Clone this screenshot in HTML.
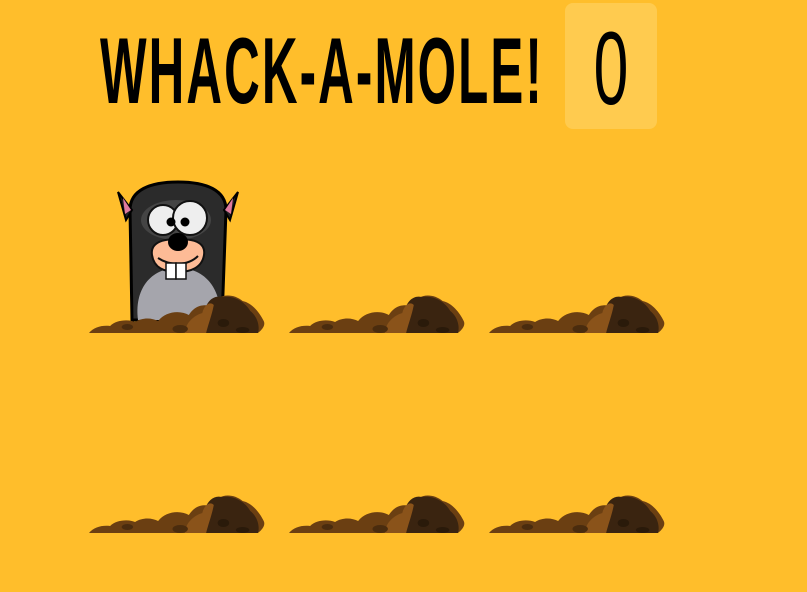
<!DOCTYPE html>
<html><head><style>
html,body{margin:0;padding:0;background:#FFBE2B;width:807px;height:592px;overflow:hidden;position:relative;font-family:"Liberation Sans Narrow","Liberation Sans",sans-serif}
.title{position:absolute;left:100px;top:24px;font-size:94px;font-weight:bold;color:#000;line-height:1;transform-origin:0 0;transform:scaleX(0.525);letter-spacing:4px;white-space:nowrap}
.score{position:absolute;left:565px;top:3px;width:92px;height:126px;background:#FFCB4F;border-radius:8px}
.score span{position:absolute;left:0;width:92px;top:14px;text-align:center;font-size:104px;line-height:1;color:#000;transform:scaleX(0.6)}
.s{position:absolute}
</style></head><body>
<div class="title">WHACK-A-MOLE!</div>
<div class="score"><span>0</span></div>
<svg width="807" height="592" class="s" style="left:0;top:0">
<defs>
<g id="dirt" transform="scale(0.96,1)">
<path d="M0,40 C5,34 14,32 22,33 C28,27 40,26 48,29 C56,24 66,25 72,28 C80,18 95,17 104,22 C112,10 122,12 128,13 C134,0 150,0 160,8 C170,10 178,20 182,28 C185,34 176,40 176,40 Z" fill="#6B3F12"/>
<path d="M112,40 C112,30 115,22 120,20 C122,8 130,2 138,4 C150,2 162,8 168,18 C176,24 178,34 176,40 Z" fill="#3A2410"/>
<path d="M100,40 C100,30 110,22 118,20 C120,12 126,8 130,12 C128,22 124,32 122,40 Z" fill="#8A531A"/>
<ellipse cx="95" cy="36" rx="8" ry="4" fill="#4A2C0E"/>
<ellipse cx="140" cy="30" rx="6" ry="4" fill="#2A1A0A"/>
<ellipse cx="160" cy="37" rx="7" ry="3" fill="#2A1A0A"/>
<ellipse cx="40" cy="34" rx="6" ry="3" fill="#4A2C0E"/>
</g>
</defs>
<g>
<path d="M132,320 L130,210 C130,190 150,182 178,182 C206,182 226,190 226,210 L222,320 Z" fill="#2B2B2B" stroke="#000" stroke-width="3"/>
<path d="M132,210 L118,192 L126,220 Z" fill="#222" stroke="#000" stroke-width="2"/>
<path d="M123,198 L125,214 L131,210 Z" fill="#E07A9E"/>
<path d="M224,210 L238,192 L230,220 Z" fill="#222" stroke="#000" stroke-width="2"/>
<path d="M233,198 L231,214 L225,210 Z" fill="#E07A9E"/>
<path d="M138,320 C134,290 150,268 178,268 C206,268 222,290 220,320 Z" fill="#A5A5AC"/>
<ellipse cx="176" cy="220" rx="35" ry="20" fill="#444"/>
<circle cx="163" cy="220" r="15" fill="#eee" stroke="#111" stroke-width="2"/>
<circle cx="190" cy="218" r="17" fill="#eee" stroke="#111" stroke-width="2"/>
<circle cx="171" cy="222" r="4.5" fill="#000"/><circle cx="185" cy="222" r="4.5" fill="#000"/>
<path d="M152,255 C150,242 165,238 178,240 C192,238 206,242 204,255 C202,268 190,272 178,272 C164,272 154,268 152,255 Z" fill="#FDBB96" stroke="#111" stroke-width="2"/>
<ellipse cx="178" cy="242" rx="10" ry="9" fill="#000"/>
<path d="M158,258 C170,266 188,266 198,256" fill="none" stroke="#111" stroke-width="2"/>
<rect x="166" y="263" width="10" height="16" fill="#fff" stroke="#111" stroke-width="1.5"/>
<rect x="176" y="263" width="10" height="16" fill="#fff" stroke="#111" stroke-width="1.5"/>
</g>
<use href="#dirt" x="89" y="293"/>
<use href="#dirt" x="289" y="293"/>
<use href="#dirt" x="489" y="293"/>
<use href="#dirt" x="89" y="493"/>
<use href="#dirt" x="289" y="493"/>
<use href="#dirt" x="489" y="493"/>
</svg>
</body></html>
